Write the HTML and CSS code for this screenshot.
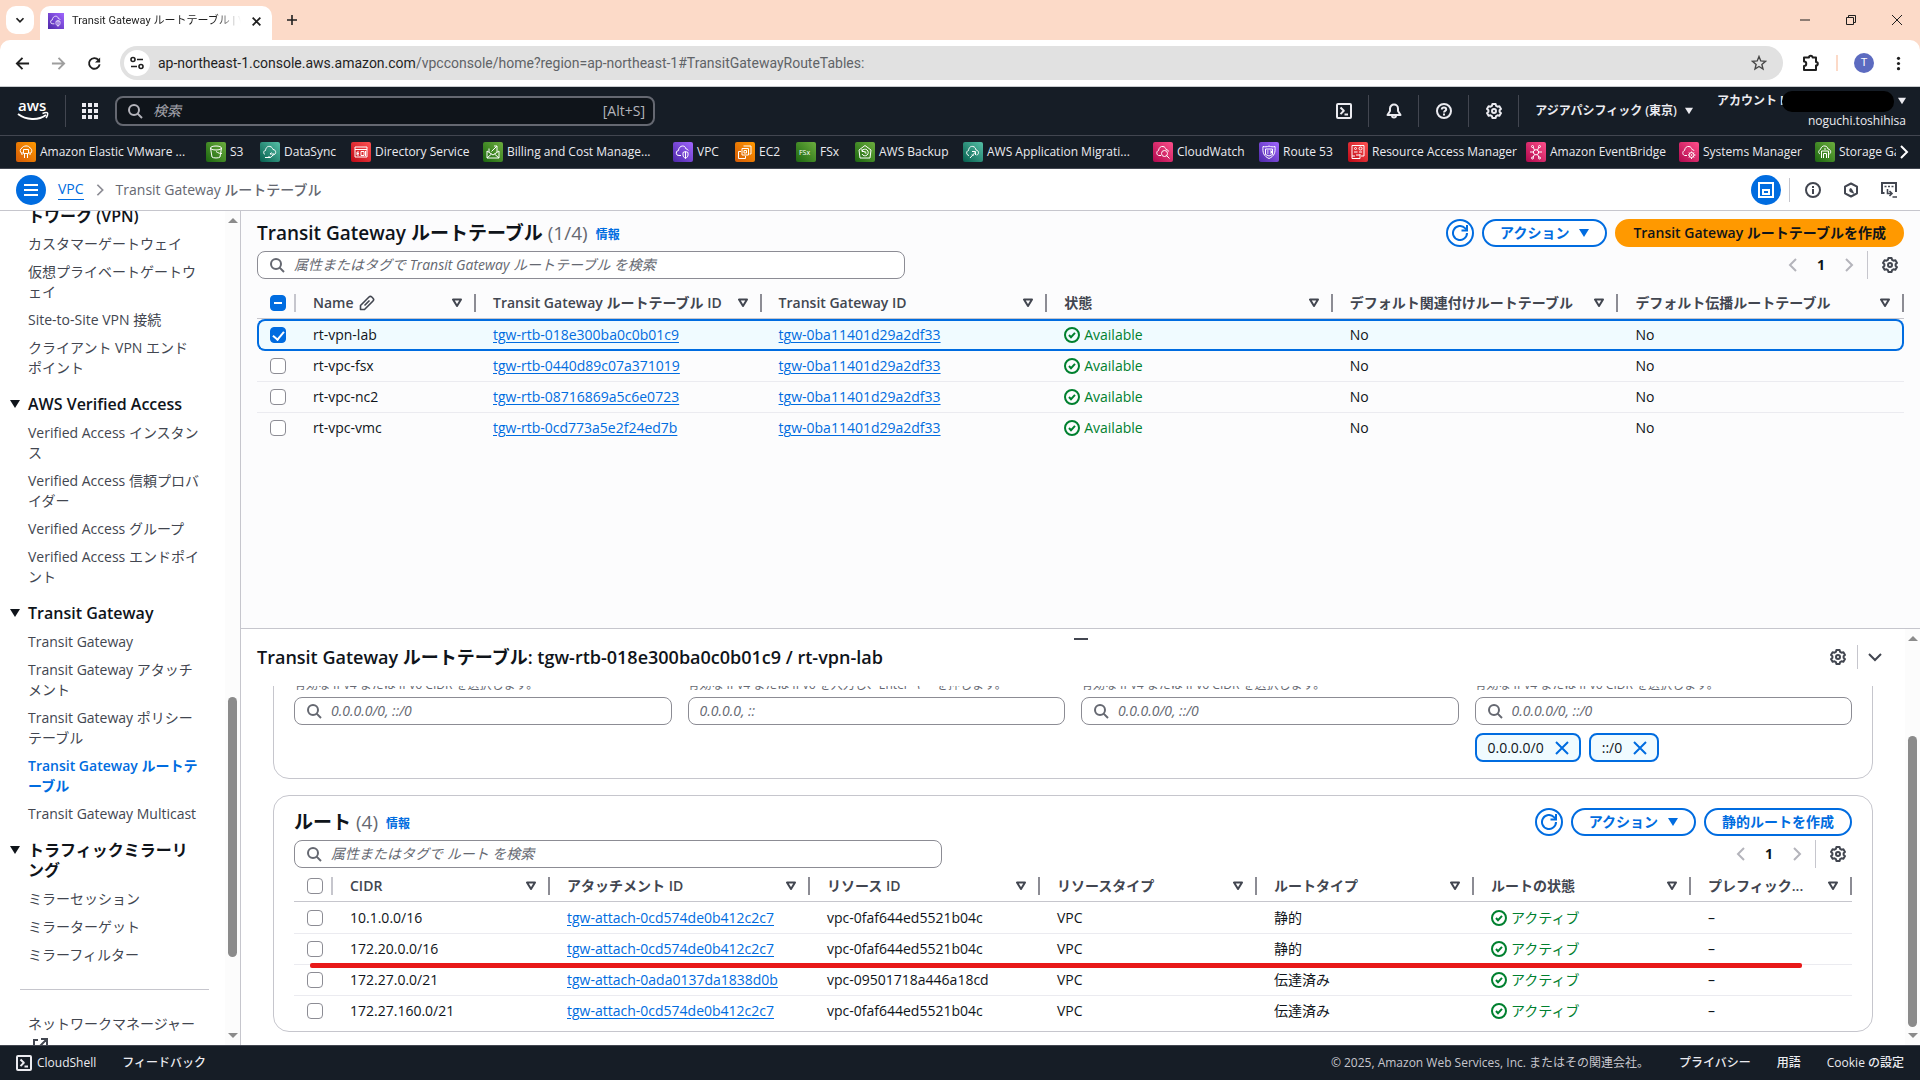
FILE: index.html
```html
<!DOCTYPE html>
<html lang="ja">
<head>
    <meta charset="UTF-8">
    <meta name="viewport" content="width=device-width, initial-scale=1.0">
    <title>Transit Gateway ルートテーブル | VPC Console</title>
    <link rel="stylesheet" href="styles.css">
</head>
<body>

    <!-- shared icons -->
    <svg class="sprite" aria-hidden="true">
        <defs>
            <linearGradient id="g-orange" x1="0" y1="1" x2="1" y2="0"><stop offset="0" stop-color="#d45b07"/><stop offset="1" stop-color="#ff9900"/></linearGradient>
            <linearGradient id="g-green" x1="0" y1="1" x2="1" y2="0"><stop offset="0" stop-color="#1b660f"/><stop offset="1" stop-color="#6cae3e"/></linearGradient>
            <linearGradient id="g-teal" x1="0" y1="1" x2="1" y2="0"><stop offset="0" stop-color="#055f4e"/><stop offset="1" stop-color="#56c0a7"/></linearGradient>
            <linearGradient id="g-red" x1="0" y1="1" x2="1" y2="0"><stop offset="0" stop-color="#bd0816"/><stop offset="1" stop-color="#ff5252"/></linearGradient>
            <linearGradient id="g-purple" x1="0" y1="1" x2="1" y2="0"><stop offset="0" stop-color="#4d27a8"/><stop offset="1" stop-color="#a166ff"/></linearGradient>
            <linearGradient id="g-pink" x1="0" y1="1" x2="1" y2="0"><stop offset="0" stop-color="#b0084d"/><stop offset="1" stop-color="#ff4f8b"/></linearGradient>
        </defs>
        <symbol id="i-search" viewBox="0 0 16 16"><g fill="none" stroke="currentColor" stroke-width="2"><circle cx="7" cy="7" r="5"/><path d="M10.6 10.6 15 15"/></g></symbol>
        <symbol id="i-gear" viewBox="0 0 16 16"><g fill="none" stroke="currentColor" stroke-width="2" stroke-linejoin="round"><path d="M6.4 1h3.2l.5 1.9 1.4.8 1.9-.5 1.6 2.7-1.4 1.4v1.4l1.4 1.4-1.6 2.7-1.9-.5-1.4.8L9.600 15H6.400l-.5-1.900-1.400-.8-1.900.5L1 10.100l1.400-1.400V7.300L1 5.900l1.600-2.700 1.900.5 1.400-.8z"/><circle cx="8" cy="8" r="2"/></g></symbol>
        <symbol id="i-left" viewBox="0 0 16 16"><path d="M11 2 5 8l6 6" fill="none" stroke="currentColor" stroke-width="2"/></symbol>
        <symbol id="i-right" viewBox="0 0 16 16"><path d="m5 2 6 6-6 6" fill="none" stroke="currentColor" stroke-width="2"/></symbol>
        <symbol id="i-down" viewBox="0 0 16 16"><path d="m2 5 6 6 6-6" fill="none" stroke="currentColor" stroke-width="2"/></symbol>
        <symbol id="i-close" viewBox="0 0 16 16"><path d="m2 2 12 12M14 2 2 14" fill="none" stroke="currentColor" stroke-width="2"/></symbol>
        <symbol id="i-caret" viewBox="0 0 10 10"><path d="M0 1h10L5 9z" fill="currentColor"/></symbol>
        <symbol id="i-filter" viewBox="0 0 10 10"><path d="M1 1.500h8L5 8z" fill="none" stroke="currentColor" stroke-width="2" stroke-linejoin="round"/></symbol>
        <symbol id="i-refresh" viewBox="0 0 16 16"><g fill="none" stroke="currentColor" stroke-width="2"><path d="M15 8a7 7 0 1 1-2-4.900L15 5"/><path d="M15 0v5.500H9.500"/></g></symbol>
        <symbol id="i-ok" viewBox="0 0 16 16"><g fill="none" stroke="currentColor" stroke-width="2"><circle cx="8" cy="8" r="7"/><path d="m5 8 2 2.200L11 5.800"/></g></symbol>
        <symbol id="i-pen" viewBox="0 0 16 16"><g fill="none" stroke="currentColor" stroke-width="1.600" stroke-linejoin="round"><path d="M1.500 14.500v-4L10 2a2 2 0 0 1 2.800 0l1.200 1.200a2 2 0 0 1 0 2.800l-8.500 8.500z"/><path d="M5.500 10.500 10.500 5.500"/></g></symbol>
        <symbol id="i-shell" viewBox="0 0 16 16"><g fill="none" stroke="currentColor" stroke-width="2" stroke-linejoin="round"><rect x="1" y="1" width="14" height="14" rx="1"/><path d="m4.500 4.500 3.300 3.300-3.300 3.300M8.500 11.500H12"/></g></symbol>
        <symbol id="i-ext" viewBox="0 0 16 16"><g fill="none" stroke="currentColor" stroke-width="2"><path d="M6 2H2v12h12v-4M9 1h6v6M15 1 7 9"/></g></symbol>
        <symbol id="i-vpc" viewBox="0 0 20 20"><path fill="url(#g-purple)" d="M0 0h20v20H0z"/><g fill="none" stroke="#fff"><path d="M8 13.500H6a2.500 2.500 0 0 1-.5-5C5.500 6 7.500 4 9.500 4c2 0 3 1 3.500 3 1 0 2 .5 2.300 1.500"/><path d="M12.500 9.500 10 10.500V13c0 1.500 1 2.500 2.500 3.500 1.500-1 2.500-2 2.500-3.500v-2.500zM12.500 9.500v7"/></g></symbol>
    </svg>

    <div class="window">

        <header class="browser">
            <div class="tabstrip">
                <button class="tab-search" aria-label="タブを検索"><svg viewBox="0 0 16 16"><path d="m4 6 4 4 4-4" fill="none" stroke="currentColor" stroke-width="2"/></svg></button>
                <div class="tab">
                    <svg class="tab-favicon"><use href="#i-vpc"/></svg>
                    <span class="tab-title">Transit Gateway ルートテーブル | VPC</span>
                    <button class="tab-close" aria-label="閉じる"><svg viewBox="0 0 10 10"><path d="m1.500 1.500 7 7m0-7-7 7" stroke="currentColor" stroke-width="1.600"/></svg></button>
                </div>
                <button class="tab-new" aria-label="新しいタブ"><svg viewBox="0 0 12 12"><path d="M6 1v10M1 6h10" stroke="currentColor" stroke-width="1.600"/></svg></button>
                <div class="window-buttons">
                    <button aria-label="最小化"><svg viewBox="0 0 12 12"><path d="M1 6h10" stroke="currentColor"/></svg></button>
                    <button aria-label="元に戻す"><svg viewBox="0 0 12 12"><path d="M1.500 3.500h7v7h-7zM3.500 3.500v-2h7v7h-2" fill="none" stroke="currentColor"/></svg></button>
                    <button aria-label="ウィンドウを閉じる"><svg viewBox="0 0 12 12"><path d="m1 1 10 10m0-10L1 11" stroke="currentColor"/></svg></button>
                </div>
            </div>
            <div class="toolbar">
                <button class="tool" aria-label="戻る"><svg viewBox="0 0 16 16"><path d="M15 8H2.500M8 2 2 8l6 6" fill="none" stroke="currentColor" stroke-width="2"/></svg></button>
                <button class="tool muted" aria-label="進む"><svg viewBox="0 0 16 16"><path d="M1 8h12.500M8 2l6 6-6 6" fill="none" stroke="currentColor" stroke-width="2"/></svg></button>
                <button class="tool" aria-label="再読み込み"><svg viewBox="0 0 16 16"><path d="M13.500 9A5.700 5.700 0 1 1 12.200 4.200" fill="none" stroke="currentColor" stroke-width="2"/><path d="M14 1.500V7H8.500z" fill="currentColor"/></svg></button>
                <div class="address">
                    <button class="site-info" aria-label="サイト情報"><svg viewBox="0 0 16 16"><g fill="none" stroke="currentColor" stroke-width="1.600"><circle cx="4" cy="4.500" r="2"/><path d="M8 4.500h6M2 11.500h6"/><circle cx="12" cy="11.500" r="2"/></g></svg></button>
                    <span class="url">ap-northeast-1.console.aws.amazon.com<span class="url-path">/vpcconsole/home?region=ap-northeast-1#TransitGatewayRouteTables:</span></span>
                    <svg class="star" viewBox="0 0 16 16"><path d="m8 1.500 1.800 4.400 4.700.4-3.600 3.100 1.100 4.600L8 11.500 4 14l1.100-4.600L1.500 6.300l4.700-.4z" fill="none" stroke="currentColor" stroke-width="1.400"/></svg>
                </div>
                <button class="tool ext" aria-label="拡張機能"><svg viewBox="0 0 18 18"><path d="M2 3.500h5a1.800 1.800 0 0 1 3.600 0H14V8a1.800 1.800 0 0 1 0 3.600V16H2v-4a2.200 2.200 0 0 0 0-4.500z" fill="none" stroke="currentColor" stroke-width="2" stroke-linejoin="round"/></svg></button>
                <span class="tool-sep"></span>
                <button class="avatar" aria-label="プロファイル">T</button>
                <button class="tool dots" aria-label="メニュー"><svg viewBox="0 0 16 16" fill="currentColor"><circle cx="8" cy="2.500" r="1.700"/><circle cx="8" cy="8" r="1.700"/><circle cx="8" cy="13.500" r="1.700"/></svg></button>
            </div>
        </header>

        <nav class="aws-nav">
            <a class="logo" href="#" aria-label="AWS"><svg viewBox="0 0 32 22"><text x="1" y="11">aws</text><path d="M1 14c8 6 20 7 28 1" fill="none" stroke="#fff" stroke-width="2"/><path d="M25.500 13.500c2-.8 4.500-1 5-.5s0 3-1.500 5" fill="none" stroke="#fff" stroke-width="1.500"/></svg></a>
            <span class="nav-sep"></span>
            <button class="apps" aria-label="サービス"><svg viewBox="0 0 16 16" fill="currentColor"><path d="M0 0h4v4H0zM6 0h4v4H6zM12 0h4v4h-4zM0 6h4v4H0zM6 6h4v4H6zM12 6h4v4h-4zM0 12h4v4H0zM6 12h4v4H6zM12 12h4v4h-4z"/></svg></button>
            <div class="nav-search">
                <svg><use href="#i-search"/></svg>
                <input type="text" placeholder="検索" aria-label="検索">
                <span>[Alt+S]</span>
            </div>
            <div class="nav-tools">
                <button aria-label="CloudShell"><svg><use href="#i-shell"/></svg></button>
                <button aria-label="通知"><svg viewBox="0 0 16 16"><g fill="none" stroke="currentColor" stroke-width="2" stroke-linejoin="round"><path d="M8 1.500a4 4 0 0 0-4 4V8l-2.500 4h13L12 8V5.500a4 4 0 0 0-4-4z"/><path d="M6 12.500a2 2 0 0 0 4 0"/></g></svg></button>
                <button aria-label="ヘルプ"><svg viewBox="0 0 16 16"><g fill="none" stroke="currentColor" stroke-width="2"><circle cx="8" cy="8" r="7"/><path d="M5.800 6.500C5.800 5 6.800 4.500 8 4.500s2.200.7 2.200 1.900C10.200 8 8 7.800 8 9.500M8 10.500v2"/></g></svg></button>
                <button aria-label="設定"><svg><use href="#i-gear"/></svg></button>
            </div>
            <button class="region">アジアパシフィック (東京) <svg><use href="#i-caret"/></svg></button>
            <div class="account">
                <button class="account-id">アカウント I<span class="redacted"></span><svg><use href="#i-caret"/></svg></button>
                <span>noguchi.toshihisa</span>
            </div>
        </nav>

        <nav class="favorites">
            <div class="fav-list">
                <a href="#"><svg viewBox="0 0 20 20"><path fill="url(#g-orange)" d="M0 0h20v20H0z"/><g fill="none" stroke="#fff"><path d="M6 11.500a3 3 0 0 1 0-5.500C7 3.500 13 3 14 6c2 .5 2.500 4 .5 5.500"/><path d="M7.500 7.500h5v4h-5zM8.500 11.500V16M11.500 11.500V16M6 13v-3M14 13v-3"/></g></svg>Amazon Elastic VMware ...</a>
                <a href="#"><svg viewBox="0 0 20 20"><path fill="url(#g-green)" d="M0 0h20v20H0z"/><g fill="none" stroke="#fff"><ellipse cx="10" cy="6" rx="5.500" ry="2"/><path d="m4.500 6 1.500 9c1 1.300 7 1.300 8 0l1.500-9M10 9.500c2 1.500 5 2.500 6 2"/></g></svg>S3</a>
                <a href="#"><svg viewBox="0 0 20 20"><path fill="url(#g-teal)" d="M0 0h20v20H0z"/><g fill="none" stroke="#fff"><path d="M5 12.500c-2-1-1.500-4 .5-4C6 5 8 4 10 4.500c2 .3 2.500 2 3 3 3 0 3.500 4 1.500 5"/><path d="M5 15.500h5l-1.500-1.500M14.500 12H10l1.500-1.500M10 15.500c2 0 2-3 4.500-3"/></g></svg>DataSync</a>
                <a href="#"><svg viewBox="0 0 20 20"><path fill="url(#g-red)" d="M0 0h20v20H0z"/><g fill="none" stroke="#fff"><path d="M4 5h12v10H4zM4 7.500h12M6 10v3h2M6 11.500h2M10 9.500h3v4h-3zM6 10h2M14.500 9v5"/></g></svg>Directory Service</a>
                <a href="#"><svg viewBox="0 0 20 20"><path fill="url(#g-green)" d="M0 0h20v20H0z"/><g fill="none" stroke="#fff"><path d="m4 9 6 4 6-4v7H4zM4 16l4.500-4M16 16l-4.500-4M6 10V6.500M14 10V4h-3M14 4 8.500 9.500"/></g></svg>Billing and Cost Manage...</a>
                <a href="#"><svg><use href="#i-vpc"/></svg>VPC</a>
                <a href="#"><svg viewBox="0 0 20 20"><path fill="url(#g-orange)" d="M0 0h20v20H0z"/><g fill="none" stroke="#fff"><path d="M7 6.500h6.500V13H7zM9 8.500h2.500V11H9zM6 9.500H3.500v7h7V14M8.500 4H16v8h-1.500"/></g></svg>EC2</a>
                <a href="#"><svg class="fsx" viewBox="0 0 20 20"><path fill="url(#g-green)" d="M0 0h20v20H0z"/><text x="3" y="13">FSx</text></svg>FSx</a>
                <a href="#"><svg viewBox="0 0 20 20"><path fill="url(#g-green)" d="M0 0h20v20H0z"/><g fill="none" stroke="#fff"><path d="m10 3.500 6 4.500-1 8H5L4 8z"/><path d="M7 9a3.300 3.300 0 1 1 0 3M7 7v2.500h2.500M10 9v2h1.500"/></g></svg>AWS Backup</a>
                <a href="#"><svg viewBox="0 0 20 20"><path fill="url(#g-teal)" d="M0 0h20v20H0z"/><g fill="none" stroke="#fff"><path d="M6 13.500C3 13 3 9 5.500 8.500 6 5 8 4 10 4.500c2 .3 2.700 2 3 3.500 3.500.5 3 5 .5 5"/><path d="m7 16 5.500-6M9 9.500h3.500V13M9 12.500l1.500 1.500"/></g></svg>AWS Application Migrati...</a>
                <a href="#"><svg viewBox="0 0 20 20"><path fill="url(#g-pink)" d="M0 0h20v20H0z"/><g fill="none" stroke="#fff"><path d="M8 13.500H5.500c-2.500-1-2-4.500 0-5C6 5.500 8 4 10 4.500c2 .3 2.500 1.500 3 3 1.500.2 2.500 1 2.500 2"/><circle cx="11.500" cy="11.500" r="3"/><path d="m13.500 13.500 3 3"/></g></svg>CloudWatch</a>
                <a href="#"><svg viewBox="0 0 20 20"><path fill="url(#g-purple)" d="M0 0h20v20H0z"/><g fill="none" stroke="#fff"><path d="M4 4.500c2 .5 4 .5 6-.5 2 1 4 1 6 .5.5 6-.5 9.500-6 12-5.500-2.500-6.500-6-6-12z"/><path d="M6.500 7h7v5.500l-3.500 1.500-3.500-1.500zM8 9h1.500M8 11h1.500M11 9h1.500v2H11"/></g></svg>Route 53</a>
                <a href="#"><svg viewBox="0 0 20 20"><path fill="url(#g-red)" d="M0 0h20v20H0z"/><g fill="none" stroke="#fff"><path d="M4 3.500h12V14h-3M4 3.500V14h3M4 14v2.500h8M12 12v4.500M8 13h4"/><circle cx="7.500" cy="6.500" r="1"/><circle cx="12.500" cy="6.500" r="1.500"/><path d="M6 10h3.500M11 10h3"/></g></svg>Resource Access Manager</a>
                <a href="#"><svg viewBox="0 0 20 20"><path fill="url(#g-pink)" d="M0 0h20v20H0z"/><g fill="none" stroke="#fff"><path d="m10 7.500 2.500 1.500v2.500L10 13l-2.500-1.500V9zM7 5l1.500 3M13 5l-1.500 3M7 15.500 8.500 12.500M13 15.500l-1.500-3M4 10h3.500M12.500 10H16"/><circle cx="6.500" cy="4.500" r="1"/><circle cx="13.500" cy="4.500" r="1"/><circle cx="6.500" cy="16" r="1"/><circle cx="13.500" cy="16" r="1"/></g></svg>Amazon EventBridge</a>
                <a href="#"><svg viewBox="0 0 20 20"><path fill="url(#g-pink)" d="M0 0h20v20H0z"/><g fill="none" stroke="#fff"><path d="M8 13.500H5.500c-2.500-1-2-4.500 0-5C6 5.500 8 4 10 4.500c2 .3 2.500 1.500 3 3 1 .2 2 .8 2.200 1.500"/><circle cx="12.500" cy="13" r="2.500"/><circle cx="12.500" cy="13" r=".5"/><path d="M12.500 9.500v1M12.500 15.500v1.500M9 13h1M15 13h1.500M10 10.500l1 1M14 14.500l1 1M15 10.500l-1 1M10 15.500l1-1"/></g></svg>Systems Manager</a>
                <a href="#"><svg viewBox="0 0 20 20"><path fill="url(#g-green)" d="M0 0h20v20H0z"/><g fill="none" stroke="#fff"><path d="M5 12c-2-1-1.500-4 .5-4.500C6 5 8 3.500 10 4c2 .3 2.500 1.500 3 3 3 .3 3.500 4 1.500 5"/><path d="M6.500 16V9h7v7M8.500 16v-4.500h3V16M10 8V6"/></g></svg>Storage Gateway</a>
            </div>
            <button class="fav-next" aria-label="次へ"><svg><use href="#i-right"/></svg></button>
        </nav>

        <div class="crumb-bar">
            <button class="round-btn" aria-label="メニュー"><svg viewBox="0 0 16 16"><path d="M1 3h14M1 8h14M1 13h14" stroke="currentColor" stroke-width="2"/></svg></button>
            <a class="crumb-link" href="#">VPC</a>
            <svg class="crumb-arrow"><use href="#i-right"/></svg>
            <span class="crumb-here">Transit Gateway ルートテーブル</span>
            <div class="crumb-tools">
                <button class="round-btn" aria-label="分割パネル"><svg viewBox="0 0 16 16"><path d="M1 1h14v14H1zM5 8h6v4H5z" fill="none" stroke="currentColor" stroke-width="2"/></svg></button>
                <span class="crumb-sep"></span>
                <button aria-label="情報"><svg viewBox="0 0 16 16"><g fill="none" stroke="currentColor" stroke-width="2"><circle cx="8" cy="8" r="7"/><path d="M8 7v5M8 4v2"/></g></svg></button>
                <button aria-label="診断"><svg viewBox="0 0 16 16"><path d="m8 1.500 6 3.200v6.600l-6 3.200-6-3.200V4.700z" fill="none" stroke="currentColor" stroke-width="2" stroke-linejoin="round"/><path d="M8 6a2.300 2.300 0 0 0-1 4l4.500 2L9.500 8z" fill="currentColor"/></svg></button>
                <button aria-label="コンソール"><svg viewBox="0 0 16 16"><path d="M3.500 11H1V1h14v9" fill="none" stroke="currentColor" stroke-width="2"/><path d="M3.500 4.500h2M7 4.500h2M10.500 4.500h2M6.500 7v4.500h4M8.500 9l2.500 2.500L8.500 14M11.500 15H16" fill="none" stroke="currentColor" stroke-width="1.600"/></svg></button>
            </div>
        </div>

        <div class="content">
            <aside class="sidebar">
                <nav class="side-nav">
                    <h3>仮想プライベートネットワーク (VPN)</h3>
                    <a href="#">カスタマーゲートウェイ</a>
                    <a href="#">仮想プライベートゲートウェイ</a>
                    <a href="#">Site-to-Site VPN 接続</a>
                    <a href="#">クライアント VPN エンドポイント</a>
                    <h3><svg><use href="#i-caret"/></svg>AWS Verified Access</h3>
                    <a href="#">Verified Access インスタンス</a>
                    <a href="#">Verified Access 信頼プロバイダー</a>
                    <a href="#">Verified Access グループ</a>
                    <a href="#">Verified Access エンドポイント</a>
                    <h3><svg><use href="#i-caret"/></svg>Transit Gateway</h3>
                    <a href="#">Transit Gateway</a>
                    <a href="#">Transit Gateway アタッチメント</a>
                    <a href="#">Transit Gateway ポリシーテーブル</a>
                    <a href="#" class="current">Transit Gateway ルートテーブル</a>
                    <a href="#">Transit Gateway Multicast</a>
                    <h3><svg><use href="#i-caret"/></svg>トラフィックミラーリング</h3>
                    <a href="#">ミラーセッション</a>
                    <a href="#">ミラーターゲット</a>
                    <a href="#">ミラーフィルター</a>
                    <hr>
                    <a href="#">ネットワークマネージャー <svg class="ext-icon"><use href="#i-ext"/></svg></a>
                </nav>
                <div class="scrollbar">
                    <span class="arrow-up"></span>
                    <span class="thumb side-thumb"></span>
                    <span class="arrow-down"></span>
                </div>
            </aside>

            <main class="panels">
                <section class="tables-panel">
                    <div class="panel-head">
                        <h1>Transit Gateway ルートテーブル <span class="count">(1/4)</span></h1>
                        <a class="info" href="#">情報</a>
                        <div class="actions">
                            <button class="btn icon-btn" aria-label="更新"><svg><use href="#i-refresh"/></svg></button>
                            <button class="btn">アクション <svg class="caret"><use href="#i-caret"/></svg></button>
                            <button class="btn primary">Transit Gateway ルートテーブルを作成</button>
                        </div>
                    </div>
                    <div class="filter-row">
                        <label class="field search"><svg><use href="#i-search"/></svg><input type="text" placeholder="属性またはタグで Transit Gateway ルートテーブル を検索" aria-label="ルートテーブルを検索"></label>
                        <div class="pager">
                            <button aria-label="前へ"><svg><use href="#i-left"/></svg></button>
                            <b>1</b>
                            <button aria-label="次へ"><svg><use href="#i-right"/></svg></button>
                            <button class="prefs" aria-label="設定"><svg><use href="#i-gear"/></svg></button>
                        </div>
                    </div>
                    <table class="grid tgw-table">
                        <colgroup><col class="c-check"><col class="c-name"><col><col><col><col><col></colgroup>
                        <thead>
                            <tr>
                                <th><input type="checkbox" class="mixed" aria-label="すべて選択"></th>
                                <th><div>Name <svg class="pen"><use href="#i-pen"/></svg><svg class="filter"><use href="#i-filter"/></svg></div></th>
                                <th><div>Transit Gateway ルートテーブル ID<svg class="filter"><use href="#i-filter"/></svg></div></th>
                                <th><div>Transit Gateway ID<svg class="filter"><use href="#i-filter"/></svg></div></th>
                                <th><div>状態<svg class="filter"><use href="#i-filter"/></svg></div></th>
                                <th><div>デフォルト関連付けルートテーブル<svg class="filter"><use href="#i-filter"/></svg></div></th>
                                <th><div>デフォルト伝播ルートテーブル<svg class="filter"><use href="#i-filter"/></svg></div></th>
                            </tr>
                        </thead>
                        <tbody>
                            <tr class="selected">
                                <td><input type="checkbox" checked aria-label="rt-vpn-lab"></td>
                                <td>rt-vpn-lab</td>
                                <td><a href="#">tgw-rtb-018e300ba0c0b01c9</a></td>
                                <td><a href="#">tgw-0ba11401d29a2df33</a></td>
                                <td><span class="ok"><svg><use href="#i-ok"/></svg>Available</span></td>
                                <td>No</td>
                                <td>No</td>
                            </tr>
                            <tr>
                                <td><input type="checkbox" aria-label="rt-vpc-fsx"></td>
                                <td>rt-vpc-fsx</td>
                                <td><a href="#">tgw-rtb-0440d89c07a371019</a></td>
                                <td><a href="#">tgw-0ba11401d29a2df33</a></td>
                                <td><span class="ok"><svg><use href="#i-ok"/></svg>Available</span></td>
                                <td>No</td>
                                <td>No</td>
                            </tr>
                            <tr>
                                <td><input type="checkbox" aria-label="rt-vpc-nc2"></td>
                                <td>rt-vpc-nc2</td>
                                <td><a href="#">tgw-rtb-08716869a5c6e0723</a></td>
                                <td><a href="#">tgw-0ba11401d29a2df33</a></td>
                                <td><span class="ok"><svg><use href="#i-ok"/></svg>Available</span></td>
                                <td>No</td>
                                <td>No</td>
                            </tr>
                            <tr>
                                <td><input type="checkbox" aria-label="rt-vpc-vmc"></td>
                                <td>rt-vpc-vmc</td>
                                <td><a href="#">tgw-rtb-0cd773a5e2f24ed7b</a></td>
                                <td><a href="#">tgw-0ba11401d29a2df33</a></td>
                                <td><span class="ok"><svg><use href="#i-ok"/></svg>Available</span></td>
                                <td>No</td>
                                <td>No</td>
                            </tr>
                        </tbody>
                    </table>
                </section>

                <section class="split">
                    <div class="split-main">
                        <div class="handle"></div>
                        <div class="split-head">
                            <h2>Transit Gateway ルートテーブル: tgw-rtb-018e300ba0c0b01c9 / rt-vpn-lab</h2>
                            <button aria-label="設定"><svg><use href="#i-gear"/></svg></button>
                            <button class="collapse" aria-label="閉じる"><svg><use href="#i-down"/></svg></button>
                        </div>
                        <div class="split-body">
                            <div class="card filters">
                                <div>
                                    <label for="exact">有効な IPv4 または IPv6 CIDR を選択します。</label>
                                    <div class="field"><svg><use href="#i-search"/></svg><input type="text" id="exact" placeholder="0.0.0.0/0, ::/0"></div>
                                </div>
                                <div>
                                    <label for="longest">有効な IPv4 または IPv6 を入力し、Enter キーを押します。</label>
                                    <div class="field"><input type="text" id="longest" placeholder="0.0.0.0, ::"></div>
                                </div>
                                <div>
                                    <label for="subnet">有効な IPv4 または IPv6 CIDR を選択します。</label>
                                    <div class="field"><svg><use href="#i-search"/></svg><input type="text" id="subnet" placeholder="0.0.0.0/0, ::/0"></div>
                                </div>
                                <div>
                                    <label for="supernet">有効な IPv4 または IPv6 CIDR を選択します。</label>
                                    <div class="field"><svg><use href="#i-search"/></svg><input type="text" id="supernet" placeholder="0.0.0.0/0, ::/0"></div>
                                    <div class="chips">
                                        <span class="chip">0.0.0.0/0 <button aria-label="0.0.0.0/0 を削除"><svg><use href="#i-close"/></svg></button></span>
                                        <span class="chip">::/0 <button aria-label="::/0 を削除"><svg><use href="#i-close"/></svg></button></span>
                                    </div>
                                </div>
                            </div>

                            <div class="card routes">
                                <div class="panel-head">
                                    <h1>ルート <span class="count">(4)</span></h1>
                                    <a class="info" href="#">情報</a>
                                    <div class="actions">
                                        <button class="btn icon-btn" aria-label="更新"><svg><use href="#i-refresh"/></svg></button>
                                        <button class="btn">アクション <svg class="caret"><use href="#i-caret"/></svg></button>
                                        <button class="btn">静的ルートを作成</button>
                                    </div>
                                </div>
                                <div class="filter-row">
                                    <label class="field search"><svg><use href="#i-search"/></svg><input type="text" placeholder="属性またはタグで ルート を検索" aria-label="ルートを検索"></label>
                                    <div class="pager">
                                        <button aria-label="前へ"><svg><use href="#i-left"/></svg></button>
                                        <b>1</b>
                                        <button aria-label="次へ"><svg><use href="#i-right"/></svg></button>
                                        <button class="prefs" aria-label="設定"><svg><use href="#i-gear"/></svg></button>
                                    </div>
                                </div>
                                <div class="marked">
                                    <table class="grid route-table">
                                        <colgroup><col class="c-check"><col class="c-cidr"><col class="c-attach"><col class="c-res"><col class="c-type"><col class="c-type"><col class="c-type"><col></colgroup>
                                        <thead>
                                            <tr>
                                                <th><input type="checkbox" aria-label="すべて選択"></th>
                                                <th><div>CIDR<svg class="filter"><use href="#i-filter"/></svg></div></th>
                                                <th><div>アタッチメント ID<svg class="filter"><use href="#i-filter"/></svg></div></th>
                                                <th><div>リソース ID<svg class="filter"><use href="#i-filter"/></svg></div></th>
                                                <th><div>リソースタイプ<svg class="filter"><use href="#i-filter"/></svg></div></th>
                                                <th><div>ルートタイプ<svg class="filter"><use href="#i-filter"/></svg></div></th>
                                                <th><div>ルートの状態<svg class="filter"><use href="#i-filter"/></svg></div></th>
                                                <th><div>プレフィック...<svg class="filter"><use href="#i-filter"/></svg></div></th>
                                            </tr>
                                        </thead>
                                        <tbody>
                                            <tr>
                                                <td><input type="checkbox" aria-label="10.1.0.0/16"></td>
                                                <td>10.1.0.0/16</td>
                                                <td><a href="#">tgw-attach-0cd574de0b412c2c7</a></td>
                                                <td>vpc-0faf644ed5521b04c</td>
                                                <td>VPC</td>
                                                <td>静的</td>
                                                <td><span class="ok"><svg><use href="#i-ok"/></svg>アクティブ</span></td>
                                                <td>–</td>
                                            </tr>
                                            <tr>
                                                <td><input type="checkbox" aria-label="172.20.0.0/16"></td>
                                                <td>172.20.0.0/16</td>
                                                <td><a href="#">tgw-attach-0cd574de0b412c2c7</a></td>
                                                <td>vpc-0faf644ed5521b04c</td>
                                                <td>VPC</td>
                                                <td>静的</td>
                                                <td><span class="ok"><svg><use href="#i-ok"/></svg>アクティブ</span></td>
                                                <td>–</td>
                                            </tr>
                                            <tr>
                                                <td><input type="checkbox" aria-label="172.27.0.0/21"></td>
                                                <td>172.27.0.0/21</td>
                                                <td><a href="#">tgw-attach-0ada0137da1838d0b</a></td>
                                                <td>vpc-09501718a446a18cd</td>
                                                <td>VPC</td>
                                                <td>伝達済み</td>
                                                <td><span class="ok"><svg><use href="#i-ok"/></svg>アクティブ</span></td>
                                                <td>–</td>
                                            </tr>
                                            <tr>
                                                <td><input type="checkbox" aria-label="172.27.160.0/21"></td>
                                                <td>172.27.160.0/21</td>
                                                <td><a href="#">tgw-attach-0cd574de0b412c2c7</a></td>
                                                <td>vpc-0faf644ed5521b04c</td>
                                                <td>VPC</td>
                                                <td>伝達済み</td>
                                                <td><span class="ok"><svg><use href="#i-ok"/></svg>アクティブ</span></td>
                                                <td>–</td>
                                            </tr>
                                        </tbody>
                                    </table>
                                    <div class="red-line"></div>
                                </div>
                            </div>
                        </div>
                    </div>
                    <div class="scrollbar">
                        <span class="arrow-up"></span>
                        <span class="thumb split-thumb"></span>
                        <span class="arrow-down"></span>
                    </div>
                </section>
            </main>
        </div>

        <footer class="footer">
            <button class="shell"><svg><use href="#i-shell"/></svg>CloudShell</button>
            <a href="#">フィードバック</a>
            <span class="copyright">© 2025, Amazon Web Services, Inc. またはその関連会社。</span>
            <a href="#">プライバシー</a>
            <a href="#">用語</a>
            <a href="#">Cookie の設定</a>
        </footer>
    </div>

</body>
</html>
```

FILE: styles.css
```css
* {
    box-sizing: border-box;
}

body {
    margin: 0;
    font-family: "Open Sans", "Noto Sans", "Noto Sans CJK JP", sans-serif;
    font-size: 14px;
    line-height: 20px;
    color: #0f141a;
}

button {
    display: flex;
    align-items: center;
    justify-content: center;
    padding: 0;
    border: none;
    background: none;
    font: inherit;
    color: inherit;
    cursor: pointer;
}

a {
    color: #006ce0;
    text-decoration: none;
}

svg {
    width: 16px;
    height: 16px;
    flex: none;
}

h1, h2, h3 {
    margin: 0;
    font-weight: 600;
}

input[type="text"] {
    flex: 1;
    min-width: 0;
    padding: 0;
    border: none;
    outline: none;
    background: none;
    font: inherit;
    color: inherit;
}

input::placeholder {
    color: #656871;
    font-style: italic;
    opacity: 1;
}

.sprite {
    position: absolute;
    width: 0;
    height: 0;
}

.window {
    display: flex;
    flex-direction: column;
    height: 100vh;
    overflow: hidden;
}

/* browser chrome */
.browser {
    background: #fcdac8;
    font-family: Roboto, "Noto Sans CJK JP", sans-serif;
    color: #1f1f1f;
}

.tabstrip {
    display: flex;
    height: 40px;
    padding: 6px 0 0 6px;
}

.tab-search {
    width: 28px;
    height: 28px;
    border-radius: 10px;
    background: #fff;
}

.tab-search svg {
    width: 14px;
    height: 14px;
}

.tab {
    display: flex;
    align-items: center;
    width: 232px;
    margin-left: 6px;
    padding: 0 10px 4px 8px;
    border-radius: 10px 10px 0 0;
    background: #fff;
    font-size: 11px;
}

.tab-title {
    flex: 1;
    margin: 0 10px 0 8px;
    overflow: hidden;
    white-space: nowrap;
    -webkit-mask-image: linear-gradient(to right, #000 85%, transparent);
    mask-image: linear-gradient(to right, #000 85%, transparent);
}

.tab-close svg {
    width: 11px;
    height: 11px;
}

.tab-new {
    width: 28px;
    height: 28px;
    margin-left: 6px;
}

.tab-new svg {
    width: 12px;
    height: 12px;
}

.window-buttons {
    display: flex;
    height: 28px;
    margin-left: auto;
}

.window-buttons button {
    width: 46px;
}

.window-buttons svg {
    width: 12px;
    height: 12px;
}

.toolbar {
    display: flex;
    align-items: center;
    height: 47px;
    padding: 0 10px 0 4px;
    border-bottom: 1px solid #c9cccf;
    border-radius: 10px 10px 0 0;
    background: #fff;
}

.tool {
    width: 36px;
    height: 34px;
}

.tool svg {
    width: 15px;
    height: 15px;
}

.tool.muted {
    color: #9e9e9e;
}

.address {
    display: flex;
    align-items: center;
    flex: 1;
    height: 34px;
    margin-left: 8px;
    padding: 0 16px 0 4px;
    border-radius: 17px;
    background: #e1e1e1;
}

.site-info {
    width: 26px;
    height: 26px;
    border-radius: 50%;
    background: #fff;
}

.url {
    flex: 1;
    margin-left: 8px;
}

.url-path {
    color: #606367;
}

.star {
    color: #474747;
}

.tool.ext {
    margin-left: 10px;
}

.ext svg {
    width: 18px;
    height: 18px;
}

.tool-sep {
    width: 2px;
    height: 16px;
    margin: 0 16px 0 7px;
    background: #fcdac8;
}

.avatar {
    width: 20px;
    height: 20px;
    border-radius: 50%;
    background: #5c6bc0;
    font-size: 11px;
    color: #fff;
}

.dots {
    width: 24px;
    margin-left: 12px;
}

/* AWS header */
.aws-nav {
    display: flex;
    align-items: center;
    height: 49px;
    padding-right: 14px;
    border-bottom: 1px solid #424650;
    background: #161d26;
    color: #ebebf0;
}

.logo {
    margin-left: 17px;
}

.logo svg {
    display: block;
    width: 32px;
    height: 22px;
    overflow: visible;
}

.logo text {
    font-size: 15px;
    font-weight: 600;
    fill: #fff;
}

.nav-sep {
    width: 1px;
    height: 32px;
    margin: 0 16px;
    background: #424650;
}

.nav-search {
    display: flex;
    align-items: center;
    gap: 10px;
    width: 540px;
    height: 30px;
    margin-left: 17px;
    padding: 0 8px 0 10px;
    border: 2px solid #656871;
    border-radius: 8px;
    background: #0f141a;
    color: #b4b4bb;
}

.nav-search input::placeholder {
    color: #a4a4ad;
}

.nav-tools {
    display: flex;
    margin-left: auto;
}

.nav-tools button {
    width: 50px;
    height: 32px;
    border-right: 1px solid #424650;
}

.region {
    gap: 8px;
    margin-left: 16px;
    font-size: 12px;
    font-weight: 600;
}

.region svg,
.account svg {
    width: 8px;
    height: 8px;
}

.account {
    display: flex;
    flex-direction: column;
    align-items: flex-end;
    margin-left: 24px;
    font-size: 12px;
    font-weight: 500;
}

.account-id {
    height: 20px;
    font-weight: 700;
}

.redacted {
    width: 112px;
    height: 21px;
    margin: 0 4px 0 -2px;
    border-radius: 10px;
    background: #000;
}

.favorites {
    display: flex;
    align-items: center;
    height: 33px;
    padding: 0 8px 0 16px;
    border-bottom: 1px solid #424650;
    background: #161d26;
}

.fav-list {
    display: grid;
    grid-template-columns: 190px 54px 91px 132px 190px 62px 61px 59px 108px 190px 106px 89px 178px 153px 136px 1fr;
    flex: 1;
    overflow: hidden;
}

.fav-list a {
    display: flex;
    align-items: center;
    gap: 4px;
    min-width: 0;
    font-size: 12px;
    font-weight: 500;
    color: #ebebf0;
    white-space: nowrap;
}

.fav-list svg {
    width: 20px;
    height: 20px;
    border-radius: 2px;
}

.fsx text {
    font-size: 7px;
    font-weight: 400;
    fill: #fff;
}

.fav-next {
    color: #fff;
}

/* breadcrumbs */
.crumb-bar {
    display: flex;
    align-items: center;
    height: 42px;
    padding: 0 23px 0 16px;
    border-bottom: 1px solid #c6c6cd;
    color: #424650;
}

.round-btn {
    width: 30px;
    height: 30px;
    border-radius: 50%;
    background: #006ce0;
    color: #fff;
}

.crumb-link {
    margin-left: 12px;
    border-bottom: 1px solid #006ce0;
}

.crumb-arrow {
    width: 14px;
    height: 14px;
    margin: 0 9px;
    color: #8c8c94;
}

.crumb-here {
    font-weight: 500;
    color: #656871;
}

.crumb-tools {
    display: flex;
    align-items: center;
    gap: 22px;
    margin-left: auto;
}

.crumb-sep {
    width: 1px;
    height: 24px;
    margin: 0 -7px 0 -14px;
    background: #c6c6cd;
}

/* page body */
.content {
    display: flex;
    flex: 1;
    min-height: 0;
}

.sidebar {
    display: flex;
    width: 241px;
    border-right: 1px solid #c6c6cd;
    overflow: hidden;
}

.side-nav {
    display: flex;
    flex-direction: column;
    gap: 8px;
    flex: 1;
    min-width: 0;
    margin-top: -25px;
    padding: 0 25px 0 28px;
}

.side-nav h3 {
    position: relative;
    margin: 8px 0 1px;
    font-size: 16px;
    line-height: 20px;
}

.side-nav h3:first-child {
    margin: 0;
}

.side-nav h3 svg {
    position: absolute;
    left: -18px;
    top: 5px;
    width: 10px;
    height: 10px;
}

.side-nav a {
    color: #424650;
}

.side-nav .current {
    font-weight: 600;
    color: #006ce0;
}

.side-nav hr {
    width: 189px;
    margin: 16px 0 16px -8px;
    border: none;
    border-top: 1px solid #c6c6cd;
}

.ext-icon {
    display: block;
    margin: 4px;
}

.scrollbar {
    display: flex;
    flex: none;
    flex-direction: column;
    align-items: center;
    width: 15px;
    padding: 7px 0;
    background: #fcfcfc;
}

.arrow-up,
.arrow-down {
    border: 5px solid transparent;
    border-top-width: 0;
    border-bottom: 5px solid #8b8b8b;
}

.arrow-down {
    margin-top: auto;
    border-top: 5px solid #8b8b8b;
    border-bottom-width: 0;
}

.thumb {
    width: 9px;
    border-radius: 5px;
    background: #8b8b8b;
}

.side-thumb {
    height: 260px;
    margin-top: 474px;
}

.split-thumb {
    height: 291px;
    margin-top: 95px;
}

.panels {
    display: flex;
    flex-direction: column;
    flex: 1;
    min-width: 0;
}

.tables-panel {
    flex: 1;
    min-height: 0;
    padding: 8px 16px 0;
    background: #fcfcfd;
}

.panel-head {
    display: flex;
    align-items: center;
    height: 28px;
}

.panel-head h1 {
    font-size: 19px;
    line-height: 24px;
}

.count {
    font-weight: 400;
    color: #656871;
}

.info {
    margin: 4px 0 0 8px;
    font-size: 12px;
    line-height: 16px;
    font-weight: 700;
}

.actions {
    display: flex;
    gap: 8px;
    margin-left: auto;
}

.btn {
    gap: 10px;
    height: 28px;
    padding: 0 16px;
    border: 2px solid #006ce0;
    border-radius: 14px;
    background: #fff;
    font-weight: 600;
    color: #006ce0;
}

.icon-btn {
    width: 28px;
    padding: 0;
}

.caret {
    width: 10px;
    height: 10px;
}

.primary {
    border-color: #ff9900;
    background: #ff9900;
    color: #0f141a;
}

.filter-row {
    display: flex;
    align-items: center;
    justify-content: space-between;
    margin-top: 4px;
}

.field {
    display: flex;
    align-items: center;
    gap: 9px;
    height: 28px;
    padding: 0 11px;
    border: 1px solid #8c8c94;
    border-radius: 8px;
    background: #fff;
    color: #656871;
}

.search {
    flex: 0 1 648px;
}

.pager {
    display: flex;
    align-items: center;
    height: 28px;
}

.pager button {
    width: 28px;
    color: #b4b4bb;
}

.pager b {
    width: 28px;
    text-align: center;
}

.pager .prefs {
    width: 37px;
    height: 28px;
    margin-left: 4px;
    padding-left: 8px;
    border-left: 1px solid #c6c6cd;
    color: #424650;
}

/* data tables */
.grid {
    width: 100%;
    table-layout: fixed;
    border-spacing: 0;
}

.tgw-table {
    margin-top: 8px;
}

.c-check {
    width: 39px;
}

.c-name {
    width: 180px;
}

.c-cidr {
    width: 217px;
}

.c-attach {
    width: 260px;
}

.c-res {
    width: 230px;
}

.c-type {
    width: 217px;
}

.grid th,
.grid td {
    height: 31px;
    padding: 0 0 0 17px;
    border-bottom: 1px solid #ebebf0;
    text-align: left;
    white-space: nowrap;
}

.grid th:first-child,
.grid td:first-child {
    padding-left: 13px;
}

.grid th {
    height: 32px;
    border-bottom-color: #c6c6cd;
    background: linear-gradient(#8c8c94, #8c8c94) right center / 2px 18px no-repeat;
    font-weight: 600;
    color: #424650;
}

.grid th:first-child {
    background-image: linear-gradient(#c6c6cd, #c6c6cd);
}

.grid th div {
    display: flex;
    align-items: center;
    gap: 5px;
    padding-right: 14px;
}

.grid .filter {
    width: 10px;
    height: 10px;
    margin-left: auto;
}

.grid td a {
    text-decoration: underline;
    text-underline-offset: 2px;
}

.grid tbody tr:first-child td {
    height: 32px;
}

.grid tbody tr:last-child td {
    border-bottom-color: transparent;
}

.grid .selected td {
    border-top: 2px solid #006ce0;
    border-bottom: 2px solid #006ce0;
    background: #f0fbff;
}

.grid .selected td:first-child {
    padding-left: 11px;
    border-left: 2px solid #006ce0;
    border-radius: 8px 0 0 8px;
}

.grid .selected td:last-child {
    border-right: 2px solid #006ce0;
    border-radius: 0 8px 8px 0;
}

.ok {
    display: flex;
    align-items: center;
    gap: 4px;
    color: #00802f;
}

.grid input {
    display: flex;
    align-items: center;
    justify-content: center;
    appearance: none;
    width: 16px;
    height: 16px;
    margin: 0;
    border: 1px solid #8c8c94;
    border-radius: 4px;
    background: #fff;
}

.grid input:checked,
.grid .mixed {
    border-color: #006ce0;
    background: #006ce0;
}

.grid input:checked::after {
    content: "";
    width: 5px;
    height: 9px;
    margin-bottom: 2px;
    border: solid #fff;
    border-width: 0 2px 2px 0;
    transform: rotate(40deg);
}

.grid .mixed::after {
    content: "";
    width: 8px;
    height: 2px;
    background: #fff;
}

/* split panel */
.split {
    display: flex;
    flex: none;
    height: 50%;
    border-top: 1px solid #c6c6cd;
}

.split-main {
    display: flex;
    flex-direction: column;
    flex: 1;
    min-width: 0;
}

.handle {
    width: 14px;
    height: 2px;
    margin: 9px auto 5px;
    background: #424650;
    transform: translateX(8px);
}

.split-head {
    display: flex;
    align-items: center;
    height: 24px;
    padding: 0 22px 0 16px;
    color: #424650;
}

.split-head h2 {
    flex: 1;
    font-size: 18px;
    line-height: 24px;
    color: #0f141a;
}

.collapse {
    height: 24px;
    margin-left: 11px;
    padding-left: 9px;
    border-left: 1px solid #c6c6cd;
}

.split-body {
    flex: 1;
    min-height: 0;
    margin-top: 17px;
    padding: 0 32px;
    overflow: hidden;
}

.card {
    padding: 12px 20px 4px;
    border: 1px solid #c6c6cd;
    border-radius: 16px;
}

.filters {
    display: grid;
    grid-template-columns: repeat(4, 1fr);
    gap: 16px;
    margin: -20px 0 16px;
    padding: 10px 20px 16px;
}

.filters label {
    display: block;
    margin-bottom: 4px;
    font-size: 12px;
    line-height: 16px;
    color: #656871;
}

.chips {
    display: flex;
    gap: 8px;
    margin-top: 8px;
}

.chip {
    display: flex;
    align-items: center;
    gap: 10px;
    height: 29px;
    padding: 0 9px 0 11px;
    border: 2px solid #006ce0;
    border-radius: 8px;
    background: #f0fbff;
}

.chip button {
    color: #006ce0;
}

.marked {
    position: relative;
    margin-top: 2px;
}

.red-line {
    position: absolute;
    left: 16px;
    right: 50px;
    top: 93px;
    height: 5px;
    border-radius: 2px;
    background: #e81919;
}

.footer {
    display: flex;
    align-items: center;
    gap: 26px;
    height: 35px;
    padding: 0 16px;
    border-top: 1px solid #424650;
    background: #161d26;
    font-size: 12px;
    font-weight: 500;
    color: #c6c6cd;
}

.footer a,
.shell {
    color: #ebebf0;
}

.shell {
    gap: 5px;
}

.copyright {
    margin: 0 4px 0 auto;
    font-weight: 400;
}
```
